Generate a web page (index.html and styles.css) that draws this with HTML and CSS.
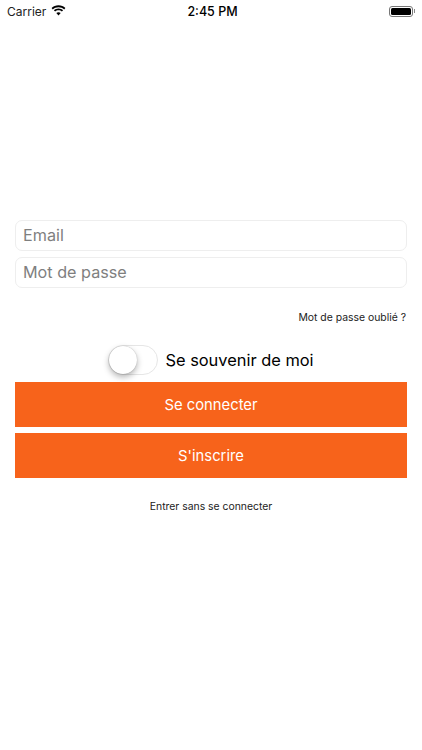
FILE: index.html
```html
<!DOCTYPE html>
<html lang="en">
<head>
    <meta charset="UTF-8">
    <meta name="viewport" content="width=device-width, initial-scale=1.0">
    <title>Connexion</title>
    <link rel="stylesheet" href="styles.css">
</head>
<body>
    <div class="status-bar">
        <div class="status-left">
            <span class="carrier">Carrier</span>
            <svg class="wifi" width="15" height="11" viewBox="0 0 15 11">
                <path d="M7.5 2.2c2.2 0 4.2.8 5.7 2.2l1.2-1.3C12.600 1.300 10.200.3 7.500.3S2.400 1.300.6 3.100l1.200 1.300c1.500-1.400 3.500-2.200 5.700-2.200z" fill="#000"/>
                <path d="M7.500 5.300c1.300 0 2.500.5 3.400 1.300l1.200-1.300C10.900 4.200 9.300 3.500 7.500 3.500s-3.400.7-4.600 1.800l1.200 1.300c.9-.8 2.100-1.300 3.400-1.300z" fill="#000"/>
                <path d="M7.500 10.500l2.200-2.400c-.6-.5-1.400-.9-2.200-.9s-1.600.4-2.200.9z" fill="#000"/>
            </svg>
        </div>
        <div class="time">2:45 PM</div>
        <div class="status-right">
            <div class="battery"><div class="battery-level"></div></div>
            <div class="battery-cap"></div>
        </div>
    </div>
    <div class="form">
        <div class="field">Email</div>
        <div class="field">Mot de passe</div>
        <div class="forgot">Mot de passe oublié ?</div>
        <div class="remember">
            <div class="switch"><div class="knob"></div></div>
            <span class="remember-label">Se souvenir de moi</span>
        </div>
        <button class="button">Se connecter</button>
        <button class="button">S'inscrire</button>
        <div class="guest">Entrer sans se connecter</div>
    </div>
</body>
</html>
```

FILE: styles.css
```css
body {
    margin: 0;
    height: 750px;
    background-color: #ffffff;
    color: #000000;
    font-family: Inter, "Liberation Sans", sans-serif;
    overflow: hidden;
}
.status-bar {
    display: grid;
    grid-template-columns: 1fr auto 1fr;
    align-items: center;
    height: 22px;
    padding: 0 7px;
}
.status-left {
    display: flex;
    align-items: center;
    gap: 5px;
}
.carrier {
    font-size: 12px;
    color: #222222;
}
.wifi {
    margin-top: -1px;
}
.time {
    margin-left: 3px;
    font-size: 12.5px;
    font-weight: 500;
}
.status-right {
    display: flex;
    justify-content: flex-end;
    align-items: center;
    gap: 1px;
}
.battery {
    box-sizing: border-box;
    width: 24px;
    height: 11px;
    padding: 1px;
    border: 1px solid #777777;
    border-radius: 3px;
}
.battery-level {
    height: 100%;
    background-color: #000000;
    border-radius: 1.5px;
}
.battery-cap {
    width: 1px;
    height: 4px;
    background-color: #888888;
}
.form {
    display: flex;
    flex-direction: column;
    padding: 198px 15px 0;
}
.field {
    box-sizing: border-box;
    height: 31px;
    margin-bottom: 6px;
    padding-left: 7px;
    border: 1px solid #eeeeee;
    border-radius: 7px;
    font-size: 16.2px;
    line-height: 28px;
    color: #7f7f7f;
}
.forgot {
    margin-top: 16px;
    padding-right: 1px;
    font-size: 10.4px;
    line-height: 16px;
    text-align: right;
    color: #222222;
}
.remember {
    display: flex;
    justify-content: center;
    align-items: center;
    gap: 7px;
    margin-top: 19px;
    margin-bottom: 7px;
}
.switch {
    box-sizing: border-box;
    width: 50px;
    height: 30px;
    border: 1px solid #e6e6e6;
    border-radius: 15px;
    background-color: #ffffff;
}
.knob {
    width: 28px;
    height: 28px;
    border-radius: 50%;
    background-color: #ffffff;
    box-shadow: 0 3px 6px rgba(0, 0, 0, 0.3), 0 0 1px rgba(0, 0, 0, 0.3);
}
.remember-label {
    font-size: 16.4px;
}
.button {
    height: 45px;
    margin-bottom: 6px;
    padding: 0;
    border: none;
    background-color: #f7631b;
    color: #ffffff;
    font-family: inherit;
    font-size: 14.8px;
}
.guest {
    margin-top: 15px;
    font-size: 10.4px;
    line-height: 16px;
    text-align: center;
    color: #222222;
}
```
